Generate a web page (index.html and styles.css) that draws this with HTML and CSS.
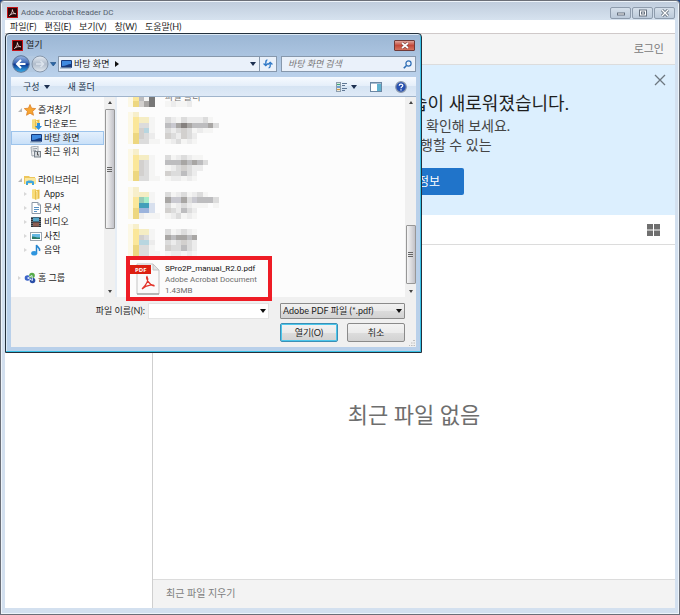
FILE: index.html
```html
<!DOCTYPE html>
<html lang="ko">
<head>
  <meta charset="UTF-8" />
  <meta name="viewport" content="width=device-width, initial-scale=1.0"/>
  <title>Adobe Acrobat Reader DC</title>
  <link rel="stylesheet" href="styles.css">
</head>
<body>

  <!-- Shared icons -->
  <svg class="defs" aria-hidden="true">
    <symbol id="acrobat" viewBox="0 0 12 12">
      <rect width="12" height="12" fill="#d3161b"/>
      <rect x="1" y="1" width="10" height="10" fill="#2b0608"/>
      <path d="M2.6 9.3C4.2 8.4 6.2 5 5.9 2.8C6 5 7.4 7.2 9.6 7.4C7.4 6.8 4.6 7.4 2.6 9.3Z" fill="none" stroke="#f0d9da" stroke-width=".9"/>
    </symbol>
    <symbol id="desktop" viewBox="0 0 12 12">
      <rect x="1" y="2" width="11" height="8" rx="1" fill="#173a7c"/>
      <path d="M2 3H11V6C8 6 6 8 2 8Z" fill="#3f8ae0"/>
      <path d="M0 10H11" stroke="#8fa6bd" stroke-width="1.2"/>
    </symbol>
    <symbol id="folder" viewBox="0 0 12 12">
      <path d="M2 1.5L6 1V11.5L2 10.5Z" fill="#f7dc7c"/>
      <path d="M5 2.5L9.5 1.5V10.5L5 11.7Z" fill="#e9bf4a"/>
      <path d="M6 3.5L7 3.3V11" stroke="#fff3b8" fill="none"/>
    </symbol>
  </svg>

  <div class="window">
    <!-- Title bar -->
    <header class="titlebar">
      <svg class="app-icon"><use href="#acrobat"/></svg>
      <h1>Adobe Acrobat Reader DC</h1>
      <div class="window-btns">
        <button aria-label="최소화"><svg viewBox="0 0 10 8"><rect x="1.5" y="4" width="7" height="2" fill="#fff" stroke="#66717f"/></svg></button>
        <button aria-label="최대화"><svg viewBox="0 0 10 8"><rect x="1.5" y="1" width="7" height="6" fill="#fff" stroke="#66717f"/><rect x="3.5" y="3" width="3" height="2" fill="none" stroke="#66717f"/></svg></button>
        <button aria-label="닫기"><svg viewBox="0 0 10 8"><path d="M2 1L8 7M8 1L2 7" stroke="#66717f" stroke-width="3"/><path d="M2 1L8 7M8 1L2 7" stroke="#fff" stroke-width="1.3"/></svg></button>
      </div>
    </header>

    <!-- Menu -->
    <nav class="menu">
      <a href="#">파일(F)</a>
      <a href="#">편집(E)</a>
      <a href="#">보기(V)</a>
      <a href="#">창(W)</a>
      <a href="#">도움말(H)</a>
    </nav>

    <div class="toolbar"><a href="#">로그인</a></div>

    <div class="home">
      <aside class="home-side"></aside>
      <main class="home-main">
        <section class="banner">
          <button class="banner-close" aria-label="닫기"><svg viewBox="0 0 12 12"><path d="M1 1L11 11M11 1L1 11" stroke="#6d7780" stroke-width="1.3"/></svg></button>
          <h2>습이 새로워졌습니다.</h2>
          <p class="line-check">확인해 보세요.</p>
          <p class="line-run">행할 수 있는</p>
          <button class="info-btn">정보</button>
        </section>
        <div class="view-row">
          <button aria-label="보기 전환"><svg viewBox="0 0 13 12"><path d="M0 0H6V5.5H0ZM7 0H13V5.5H7ZM0 6.5H6V12H0ZM7 6.5H13V12H7Z" fill="#6f6f6f"/></svg></button>
        </div>
        <div class="recent">최근 파일 없음</div>
        <footer class="home-footer"><a href="#">최근 파일 지우기</a></footer>
      </main>
    </div>

    <!-- Open dialog -->
    <div class="dialog" role="dialog" aria-label="열기">
      <div class="dialog-title">
        <svg class="app-icon"><use href="#acrobat"/></svg>
        <span>열기</span>
        <button class="dialog-close" aria-label="닫기"><svg viewBox="0 0 8 7"><path d="M1 1L7 6M7 1L1 6" stroke="#6b3d3a" stroke-width="2.8"/><path d="M1 1L7 6M7 1L1 6" stroke="#fff" stroke-width="1.7"/></svg></button>
      </div>

      <div class="address-row">
        <div class="history">
          <svg viewBox="0 0 44 18">
            <defs>
              <linearGradient id="back" x2="0" y2="1">
                <stop offset="0" stop-color="#9db9e4"/><stop offset=".45" stop-color="#3a65b4"/><stop offset=".5" stop-color="#0d328c"/><stop offset="1" stop-color="#37b2ee"/>
              </linearGradient>
              <linearGradient id="fwd" x2="0" y2="1">
                <stop offset="0" stop-color="#e7edf4"/><stop offset=".5" stop-color="#b0bccb"/><stop offset="1" stop-color="#e3e9f0"/>
              </linearGradient>
            </defs>
            <rect x="1" y="1" width="36" height="16" rx="8" fill="#b3c9e1"/>
            <circle cx="9" cy="9" r="8.3" fill="url(#back)" stroke="#5c7597"/>
            <path d="M13.5 9H5.5M9 5L5 9L9 13" fill="none" stroke="#fff" stroke-width="2"/>
            <circle cx="28" cy="9" r="8" fill="url(#fwd)" stroke="#8797ab"/>
            <path d="M24 9H31M28.5 6L31.5 9L28.5 12" fill="none" stroke="#dce4ed" stroke-width="1.5"/>
            <path d="M38.5 7.5H44L41.25 11Z" fill="#2c67a8" stroke="#17497e" stroke-width=".6"/>
          </svg>
        </div>
        <div class="address">
          <svg class="icon"><use href="#desktop"/></svg>
          <span>바탕 화면</span>
          <svg class="crumb" viewBox="0 0 4 6"><path d="M0 0L4 3L0 6Z" fill="#111"/></svg>
          <i class="arrow"></i>
        </div>
        <button class="refresh" aria-label="새로 고침"><svg viewBox="0 0 10 9"><path d="M4.5 .8C3 .8 3 2 3 5M1 4L3 6L5 4M5.5 8C7 8 7 7 7 4M5 5L7 3L9 5" fill="none" stroke="#2f78c6" stroke-width="1.2"/></svg></button>
        <div class="search">
          <input type="text" aria-label="바탕 화면 검색" placeholder="바탕 화면 검색">
          <svg viewBox="0 0 9 9"><circle cx="5.5" cy="3.5" r="2.6" fill="none" stroke="#2d6db5" stroke-width="1.2"/><path d="M3.5 5.5L.8 8.3" stroke="#2d6db5" stroke-width="1.6"/></svg>
        </div>
      </div>

      <div class="command-bar">
        <button>구성 <i class="arrow"></i></button>
        <button>새 폴더</button>
        <div class="view-tools">
          <button aria-label="보기"><svg class="views" viewBox="0 0 11 10"><rect x=".5" y=".5" width="4" height="9" fill="#f6fafc" stroke="#8d9dac"/><path d="M1 2.5H4" stroke="#3da377" stroke-width="1.4"/><path d="M1 5H4" stroke="#3779bd" stroke-width="1.4"/><path d="M1 7.5H4" stroke="#d29b42" stroke-width="1.4"/><path d="M6 1.5H11M6 3.5H9M6 6.5H11M6 8.5H9" stroke="#5f7794"/></svg><i class="arrow"></i></button>
          <button aria-label="미리 보기 창"><svg class="pane" viewBox="0 0 12 10"><rect x=".5" y=".5" width="11" height="9" fill="#fff" stroke="#6c88a4"/><path d="M1 1.5H11" stroke="#a8bdd2"/><rect x="7" y="2" width="4" height="7" fill="#60b2cf"/></svg></button>
          <button aria-label="도움말"><svg class="help" viewBox="0 0 12 12"><circle cx="6" cy="6" r="5.3" fill="#2750b0" stroke="#8b98ad" stroke-width="1.2"/><path d="M4.2 4.8C4.2 2.6 7.8 2.6 7.8 4.6C7.8 5.9 6 5.7 6 7.2M6 8.2V9.4" fill="none" stroke="#fff" stroke-width="1.2"/></svg></button>
        </div>
      </div>

      <div class="dialog-body">
        <ul class="tree">
          <li class="group open"><svg class="icon" viewBox="0 0 12 12"><path d="M6 .5L7.6 4.2L11.7 4.6L8.6 7.3L9.5 11.3L6 9.2L2.5 11.3L3.4 7.3L.3 4.6L4.4 4.2Z" fill="#f7a531" stroke="#d9781d" stroke-width=".7"/></svg>즐겨찾기</li>
          <li><svg class="icon" viewBox="0 0 12 12"><use href="#folder" width="12" height="12"/><path d="M7 5H10V8H12L8.5 12L5 8H7Z" fill="#2a8fe0"/></svg>다운로드</li>
          <li class="selected"><svg class="icon"><use href="#desktop"/></svg>바탕 화면</li>
          <li><svg class="icon" viewBox="0 0 12 12"><path d="M1 1L8 0V9L2 10Z" fill="#eef0f2" stroke="#8f979f" stroke-width=".8"/><path d="M2.5 3L7 2.5M2.5 5L6 4.6" stroke="#8f979f"/><rect x="4.5" y="5.5" width="6" height="5.5" fill="#d4d9de" stroke="#79828b"/><path d="M7.5 6V9H9" stroke="#555" fill="none"/></svg>최근 위치</li>
          <li class="group open spaced"><svg class="icon" viewBox="0 0 12 12"><path d="M0 2H5L6 3H11V10H0Z" fill="#edc65c"/><path d="M1 4H12V10H1Z" fill="#fae79c"/><path d="M2 10V8C2 6 10 6 10 8V11H8V9H4V11H2Z" fill="#40a5dc"/></svg>라이브러리</li>
          <li class="child"><svg class="icon"><use href="#folder"/></svg>Apps</li>
          <li class="child"><svg class="icon" viewBox="0 0 12 12"><path d="M2 .5H8L10.5 3V11.5H2Z" fill="#fff" stroke="#8a97a5"/><path d="M8 .5V3H10.5" fill="#dbe3eb" stroke="#8a97a5"/><path d="M4 5.5H9M4 7.5H9M4 9.5H7" stroke="#5792c4"/></svg>문서</li>
          <li class="child"><svg class="icon" viewBox="0 0 12 12"><rect x="1" y="1" width="10" height="10" fill="#2a3138"/><rect x="3" y="1.5" width="6" height="4" fill="#54a5c8"/><rect x="3" y="6.5" width="6" height="4" fill="#8b5d52"/><path d="M2 1V11M10 1V11" stroke="#a8b3bb" stroke-dasharray="1 1"/></svg>비디오</li>
          <li class="child"><svg class="icon" viewBox="0 0 12 12"><rect x=".5" y="2.5" width="11" height="8" fill="#fff" stroke="#9aa5ae"/><rect x="2" y="4" width="8" height="5" fill="#67b9e4"/><path d="M2 9V6.5C5 6 6 8 10 7.5V9Z" fill="#2a7b66"/></svg>사진</li>
          <li class="child"><svg class="icon" viewBox="0 0 12 12"><path d="M6.5 9.5V1C7 3 10.5 3.5 9.5 7" fill="none" stroke="#2384cf" stroke-width="1.5"/><ellipse cx="4.2" cy="9.3" rx="3" ry="2.2" fill="#2f96df"/></svg>음악</li>
          <li class="group spaced"><svg class="icon" viewBox="0 0 12 12"><circle cx="3.5" cy="6" r="2.8" fill="#3b63c8"/><circle cx="8" cy="3.5" r="2.8" fill="#57ab48"/><circle cx="8.5" cy="8.5" r="2.8" fill="#2b4fa8"/><path d="M3.5 6L8 3.5L8.5 8.5Z" fill="none" stroke="#d9e6f5"/></svg>홈 그룹</li>
        </ul>
        <div class="scrollbar tree-scroll"><i class="up"></i><div class="thumb"></div><i class="down"></i></div>

        <div class="files">
          <span class="cut-label">파일 폴더</span>
          <svg class="mosaic" id="mosaic" viewBox="0 0 18 30" shape-rendering="crispEdges"></svg>
          <div class="file">
            <svg viewBox="0 0 30 32">
              <path d="M7 1H23L29 7V31H7Z" fill="#fafafa" stroke="#c4c4c4"/>
              <path d="M7 31H29" stroke="#8d8d8d"/>
              <path d="M23 1V7H29Z" fill="#e2e2e2" stroke="#c4c4c4"/>
              <rect y="2" width="21" height="9" fill="#dc1f10"/>
              <text x="5" y="9" class="pdf-tag">PDF</text>
              <path d="M12 26C14 24 20 18 17 13.5C15.5 15 19 22 24 23C25 21.5 17 21 12 26Z" fill="none" stroke="#e2352b" stroke-width="1.2"/>
            </svg>
            <div class="file-text">
              <strong>SPro2P_manual_R2.0.pdf</strong>
              <span>Adobe Acrobat Document</span>
              <span>1.43MB</span>
            </div>
            <div class="highlight"></div>
          </div>
        </div>
        <div class="scrollbar files-scroll"><i class="up"></i><div class="thumb"></div><i class="down"></i></div>
      </div>

      <form class="dialog-footer">
        <label for="fileName">파일 이름(N):</label>
        <div class="combo"><input type="text" id="fileName"><i class="arrow"></i></div>
        <div class="combo type">
          <select aria-label="파일 형식"><option>Adobe PDF 파일 (*.pdf)</option></select>
          <i class="arrow"></i>
        </div>
        <div class="dialog-btns">
          <button type="button" class="primary">열기(O)</button>
          <button type="button">취소</button>
        </div>
        <svg class="grip" viewBox="0 0 6 6"><path d="M4 0H6V1H4ZM2 2.5H3.5V3.5H2ZM4.5 2.5H6V3.5H4.5ZM0 5H1V6H0ZM2 5H3.5V6H2ZM4.5 5H6V6H4.5Z" fill="#bdbdbd"/></svg>
      </form>
    </div>
  </div>

  <script src="mosaic.js"></script>
</body>
</html>
```
FILE: styles.css
```css
:root {
  --text: #1e1e1e;
  --muted: #6e6e6e;
  --frame: #d3e0ef;
  --line: #dcdcdc;
  --banner: #dceffe;
  --blue: #2074ca;
}

* {
  margin: 0;
  padding: 0;
  box-sizing: border-box;
}

body {
  font-family: Lato, "Noto Sans CJK KR", sans-serif;
  font-size: 9px;
  line-height: 14px;
  color: var(--text);
  background: #20478a;
}

button,
input,
select {
  font: inherit;
  color: inherit;
  border: none;
  background: none;
}

button {
  display: flex;
  align-items: center;
  justify-content: center;
}

a {
  color: inherit;
  text-decoration: none;
}

svg {
  display: block;
  flex: none;
}

.defs {
  position: absolute;
  width: 0;
  height: 0;
}

.arrow {
  flex: none;
  border: 3px solid transparent;
  border-top: 4px solid #1c2f50;
  border-bottom: none;
}

/* Main window */
.window {
  position: relative;
  display: flex;
  flex-direction: column;
  min-height: 100vh;
  padding: 2px 4px 6px;
  border: 1px solid #6b6f78;
  border-radius: 4px 4px 0 0;
  background: var(--frame);
  box-shadow: inset 0 0 0 1px #eef4fa;
}

.titlebar {
  display: flex;
  align-items: center;
  height: 18px;
  margin: -1px -3px 0;
  padding: 3px 3px 0 5px;
  gap: 3px;
  background: linear-gradient(#c0cddd, #d6e2ef);
}

.app-icon {
  width: 11px;
  height: 11px;
}

.titlebar h1 {
  font-family: Roboto, sans-serif;
  font-size: 8px;
  font-weight: normal;
  color: #56616e;
}

.window-btns {
  display: flex;
  gap: 1px;
  margin-left: auto;
}

.window-btns button {
  width: 21px;
  height: 12px;
  border: 1px solid #8e9cad;
  border-radius: 2px;
  background: linear-gradient(#d5dfea, #bccada);
}

.window-btns svg {
  width: 10px;
  height: 8px;
}

.menu {
  display: flex;
  gap: 8px;
  height: 14px;
  padding: 0 5px;
  background: #fff;
  border-bottom: 1px solid #cfc9c9;
}

.toolbar {
  display: flex;
  align-items: center;
  justify-content: flex-end;
  height: 31px;
  padding: 0 11px;
  font-size: 11px;
  color: #7a7a7a;
  background: #f4f4f4;
  border-bottom: 1px solid var(--line);
}

/* Home view */
.home {
  flex: 1;
  display: flex;
  background: #fff;
}

.home-side {
  width: 148px;
  border-right: 1px solid #cfcfcf;
}

.home-main {
  flex: 1;
  display: flex;
  flex-direction: column;
}

.banner {
  position: relative;
  height: 150px;
  padding-top: 25px;
  background: var(--banner);
}

.banner h2 {
  padding-left: 258px;
  font-size: 18px;
  font-weight: normal;
  line-height: 26px;
}

.banner p {
  font-size: 14px;
  line-height: 19px;
  color: #444;
}

.line-check {
  padding-left: 273px;
}

.line-run {
  padding-left: 267px;
}

.banner-close {
  position: absolute;
  top: 9px;
  right: 9px;
}

.banner-close svg {
  width: 12px;
  height: 12px;
}

.info-btn {
  width: 80px;
  height: 27px;
  margin: 14px 0 0 231px;
  padding-left: 10px;
  font-size: 12px;
  color: #fff;
  background: var(--blue);
  border-radius: 2px;
}

.view-row {
  display: flex;
  align-items: center;
  justify-content: flex-end;
  height: 30px;
  padding-right: 15px;
  border-bottom: 1px solid var(--line);
}

.view-row svg {
  width: 13px;
  height: 12px;
}

.recent {
  flex: 1;
  display: flex;
  align-items: center;
  justify-content: center;
  padding-top: 5px;
  font-size: 22px;
  line-height: 30px;
  color: var(--muted);
}

.home-footer {
  height: 29px;
  padding-left: 13px;
  font-size: 10px;
  line-height: 27px;
  color: #7d7d7d;
  background: #f3f3f3;
  border-top: 1px solid var(--line);
}

/* Open dialog */
.dialog {
  position: absolute;
  top: 32px;
  left: 4px;
  width: 417px;
  padding: 0 5px 5px;
  border: 1px solid #23303c;
  border-radius: 4px 4px 0 0;
  background: linear-gradient(#9bb6d4, #b9d0ea 40px);
  box-shadow: inset -1px -1px 0 #38c1e6, inset 1px 1px 0 #dce9f5;
}

.dialog-title {
  display: flex;
  align-items: center;
  gap: 3px;
  height: 22px;
  padding-left: 1px;
}

.dialog-close {
  width: 21px;
  height: 11px;
  margin: 0 1px 0 auto;
  border: 1px solid #6f3a38;
  border-radius: 1px;
  background: linear-gradient(#dfa49a, #c4493a 50%, #d4745f);
}

.dialog-close svg {
  width: 8px;
  height: 7px;
}

.address-row {
  display: flex;
  height: 21px;
}

.history {
  width: 47px;
}

.history svg {
  width: 44px;
  height: 18px;
  margin: -1px 0 0 1px;
}

.address,
.refresh,
.search {
  display: flex;
  align-items: center;
  height: 16px;
  border: 1px solid #8798ac;
  background: #eaf1fa;
}

.address {
  flex: 1;
  gap: 2px;
  padding: 0 3px 0 1px;
}

.address .arrow {
  margin-left: auto;
}

.crumb {
  width: 4px;
  height: 6px;
  margin-left: 4px;
}

.refresh {
  width: 17px;
  border-left: none;
}

.refresh svg {
  width: 12px;
  height: 10px;
}

.search {
  width: 135px;
  margin-left: 4px;
  padding: 0 3px 0 6px;
}

.search input {
  flex: 1;
  min-width: 0;
  height: 14px;
}

.search input::placeholder {
  font-style: italic;
  color: #777;
}

.search svg {
  width: 9px;
  height: 9px;
}

.command-bar {
  display: flex;
  align-items: center;
  gap: 18px;
  height: 20px;
  padding: 0 9px 0 12px;
  color: #25384f;
  background: linear-gradient(#f6faff, #e4eef9 50%, #d6e4f3 50%, #dfeaf7);
  border-bottom: 1px solid #a0b4cb;
}

.command-bar button {
  gap: 4px;
}

.view-tools {
  display: flex;
  gap: 13px;
  margin-left: auto;
}

.views {
  width: 11px;
  height: 10px;
}

.pane {
  width: 12px;
  height: 10px;
}

.help {
  width: 12px;
  height: 12px;
}

.icon {
  width: 12px;
  height: 12px;
}

/* Folder tree */
.dialog-body {
  display: flex;
  height: 200px;
  background: #fcfcfc;
}

.tree {
  width: 93px;
  padding-top: 6px;
  list-style: none;
}

.tree li {
  display: flex;
  align-items: center;
  gap: 2px;
  height: 14px;
  padding-left: 19px;
  white-space: nowrap;
}

.tree .group {
  padding-left: 7px;
}

.tree .child {
  padding-left: 13px;
}

.tree .spaced {
  margin-top: 14px;
}

.tree .group::before,
.tree .child::before {
  content: "";
  margin-right: 1px;
  border: 2px solid transparent;
  border-left: 3px solid #d8d8d8;
  border-right: none;
}

.tree .open::before {
  margin-right: 0;
  border: none;
  border-left: 4px solid transparent;
  border-bottom: 4px solid #b8b8b8;
}

.tree .selected {
  background: linear-gradient(#e6f1fd, #c7dff8);
  box-shadow: inset 0 0 0 1px #9dc4ec;
}

/* Scrollbars */
.scrollbar {
  display: flex;
  flex-direction: column;
  align-items: center;
  width: 11px;
  padding: 4px 0;
  background: #f0f0f0;
}

.up,
.down {
  border: 2px solid transparent;
}

.up {
  border-top: none;
  border-bottom: 3px solid #444;
}

.down {
  margin-top: auto;
  border-bottom: none;
  border-top: 3px solid #444;
}

.thumb {
  display: flex;
  align-items: center;
  justify-content: center;
  width: 10px;
  border: 1px solid #979797;
  border-radius: 1px;
  background: linear-gradient(90deg, #f5f5f5, #dcdcdf 50%, #c2c2c8);
}

.thumb::before {
  content: "";
  width: 5px;
  height: 5px;
  background: repeating-linear-gradient(#666 0 1px, transparent 1px 2px);
}

.tree-scroll .thumb {
  height: 120px;
  margin-top: 5px;
}

.files-scroll .thumb {
  height: 59px;
  margin-top: auto;
}

.files-scroll .down {
  margin-top: 6px;
}

/* File list */
.files {
  position: relative;
  flex: 1;
  padding-left: 11px;
  border-left: 2px solid #e6edf5;
}

.cut-label {
  position: absolute;
  top: 0;
  left: 48px;
  display: flex;
  align-items: flex-end;
  height: 5px;
  line-height: 10px;
  overflow: hidden;
  color: #777;
}

.mosaic {
  width: 96px;
  height: 160px;
  margin-top: -1px;
  clip-path: inset(1px 0 0 0);
}

.file {
  position: relative;
  display: flex;
  gap: 5px;
  padding: 7px 0 0 2px;
}

.file > svg {
  width: 30px;
  height: 32px;
}

.pdf-tag {
  font-family: "Open Sans", sans-serif;
  font-size: 6px;
  font-weight: bold;
  fill: #fff;
}

.file-text {
  font-family: Roboto, sans-serif;
  font-size: 8px;
  line-height: 11px;
  color: var(--muted);
}

.file-text strong,
.file-text span {
  display: block;
  font-weight: normal;
}

.file-text strong {
  color: #111;
}

.highlight {
  position: absolute;
  top: 0;
  left: -2px;
  width: 146px;
  height: 45px;
  border: 4px solid #ee1c25;
  z-index: 1;
}

/* Dialog footer */
.dialog-footer {
  position: relative;
  display: grid;
  grid-template-columns: 137px 121px 125px;
  grid-template-rows: 16px 19px;
  row-gap: 4px;
  height: 50px;
  padding: 6px 0 0;
  background: #f0f0f0;
}

.dialog-footer label {
  padding-right: 3px;
  text-align: right;
  line-height: 16px;
}

.combo {
  position: relative;
}

.combo input,
.combo select {
  width: 100%;
  height: 16px;
  padding: 0 2px;
  appearance: none;
  background: #fff;
}

.combo input {
  border: 1px solid #e3e3e3;
}

.combo .arrow {
  position: absolute;
  top: 6px;
  right: 3px;
  border-top-color: #111;
}

.type {
  margin-left: 11px;
  margin-right: -11px;
}

.combo select {
  border: 1px solid #8a8a8a;
  border-radius: 1px;
  background: linear-gradient(#f1f1f1, #e8e8e8 50%, #dcdcdc 50%, #d2d2d2);
}

.dialog-btns {
  grid-column: 3;
  display: flex;
  gap: 9px;
  margin-left: 11px;
  margin-right: -11px;
}

.dialog-btns button {
  flex: 1;
  border: 1px solid #8a8a8a;
  border-radius: 2px;
  background: linear-gradient(#f3f3f3, #ebebeb 50%, #dddddd 50%, #d2d2d2);
}

.dialog-btns .primary {
  border-color: #3c8fb5;
  box-shadow: inset 0 0 0 1px #4cc7ec;
}

.grip {
  position: absolute;
  right: 1px;
  bottom: 1px;
  width: 6px;
  height: 6px;
}
```
FILE: mosaic.js
```js
// pixelated folder tiles, one character per cell
const colors = {
  a: "#fcf8e6", b: "#f7efcb", c: "#fbe79a", d: "#edd780", e: "#f5edc4",
  f: "#f5f5f4", g: "#ececec", h: "#dcdcdc", i: "#d2d0ce", j: "#bdbdbf",
  k: "#a8a6a4", l: "#85817f", m: "#b8d6e0", n: "#98ccb8", o: "#a6ecc8",
  p: "#439fba", q: "#9bb3dc", r: "#d8e0ee", s: "#c9c9d0", t: "#777777"
};

const rows = [
  "acjft            ",
  "adikt  fgffg     ",
  "                 ",
  "ab               ",
  "aceef  hgfhggghf ",
  "achhf  jsklkjjjkh",
  "acimf  hghihfgff ",
  "adihg  ihgihg    ",
  "adhhff fghfgf    ",
  "                 ",
  "ab               ",
  "aceef  hfghgff   ",
  "acihf  jjjkjkjh  ",
  "acihf  fghihgg   ",
  "adihf  ihhjhg    ",
  "adhhff fggfgf    ",
  "                 ",
  "ab               ",
  "abeef  hfghfghf  ",
  "acnof  ksskhsjjjh",
  "acppr  hfghgfff f",
  "adqqr  ihgjhg    ",
  "adgfff fghfgf    ",
  "                 ",
  "ab               ",
  "aceef  hfghgf    ",
  "acihf  kjkkjk    ",
  "acmmg  hghihg    ",
  "adhhf  ihhjhg    ",
  "adhhff fggfgf    "
];

const mosaic = document.getElementById("mosaic");

rows.forEach((row, y) => {
  [...row].forEach((key, x) => {
    if (!colors[key]) return;
    const cell = document.createElementNS("http://www.w3.org/2000/svg", "rect");
    cell.setAttribute("x", x);
    cell.setAttribute("y", y);
    cell.setAttribute("width", 1);
    cell.setAttribute("height", 1);
    cell.setAttribute("fill", colors[key]);
    mosaic.appendChild(cell);
  });
});
```
